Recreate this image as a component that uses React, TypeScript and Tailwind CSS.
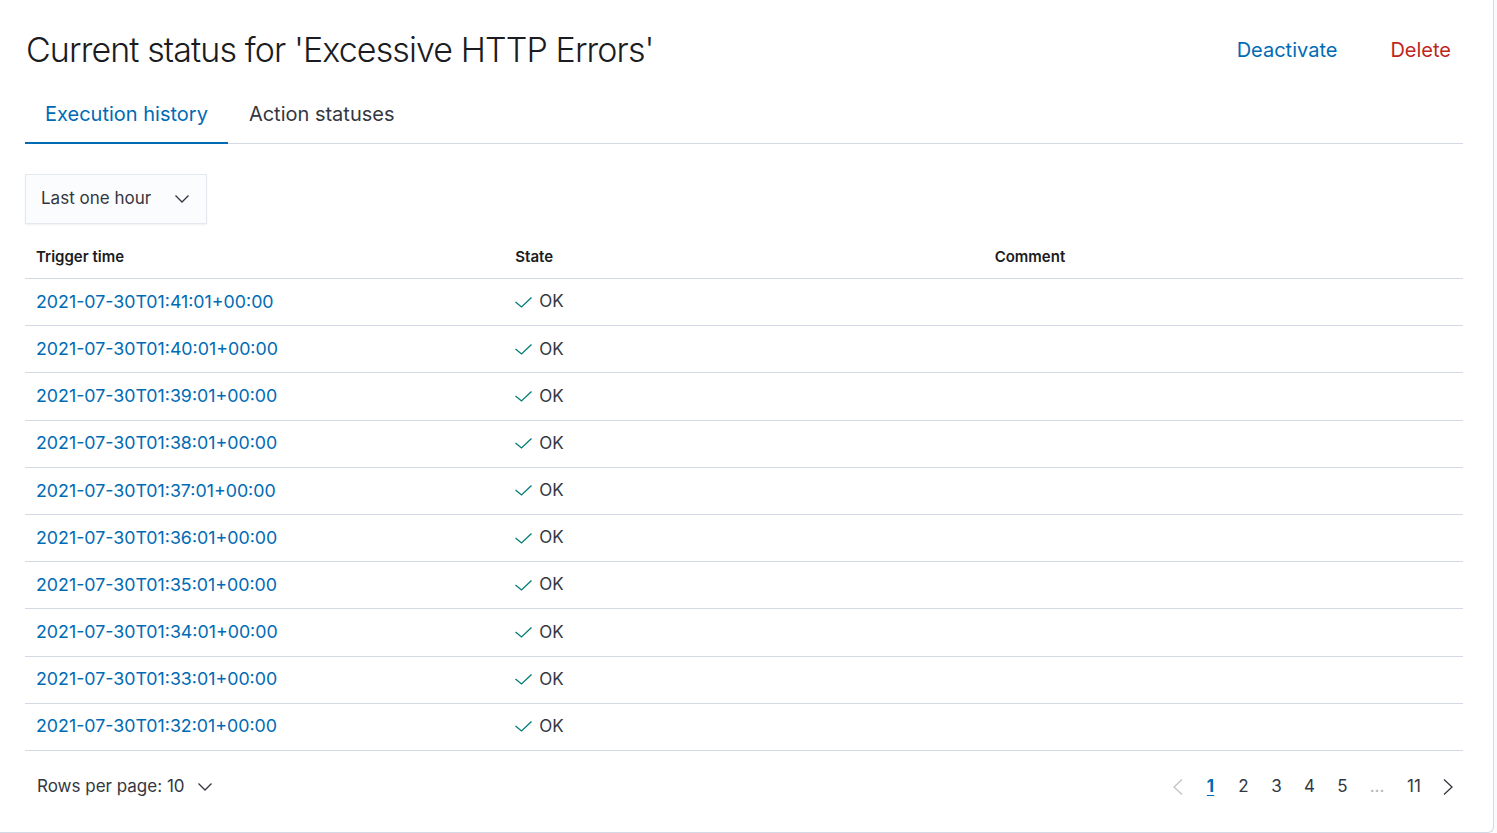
const rows = [
  "2021-07-30T01:41:01+00:00",
  "2021-07-30T01:40:01+00:00",
  "2021-07-30T01:39:01+00:00",
  "2021-07-30T01:38:01+00:00",
  "2021-07-30T01:37:01+00:00",
  "2021-07-30T01:36:01+00:00",
  "2021-07-30T01:35:01+00:00",
  "2021-07-30T01:34:01+00:00",
  "2021-07-30T01:33:01+00:00",
  "2021-07-30T01:32:01+00:00",
];

function ArrowDown() {
  return (
    <svg width="14" height="8" viewBox="0 0 14 8" fill="none" stroke="currentColor" strokeWidth="1.3">
      <polyline points="0.5,0.5 7,7 13.5,0.5" />
    </svg>
  );
}

function Arrow({ dir, className }: { dir: "left" | "right"; className?: string }) {
  return (
    <svg width="10" height="16" viewBox="0 0 10 16" fill="none" stroke="currentColor" strokeWidth="1.3" className={className}>
      {dir === "right" ? <polyline points="1,0.5 9,8 1,15.5" /> : <polyline points="9,0.5 1,8 9,15.5" />}
    </svg>
  );
}

function Tick() {
  return (
    <svg width="17" height="11" viewBox="0 0 17 11" fill="none" stroke="#017d73" strokeWidth="1.3">
      <polyline points="0.5,5 6.5,10 16.5,0.5" />
    </svg>
  );
}

export default function App() {
  return (
    <div
      className="flex h-[833px] w-[1497px] overflow-hidden bg-[#fafbfd] text-[#343741]"
      style={{ fontFamily: "Inter, 'Noto Sans', sans-serif" }}
    >
      <div className="flex h-[833px] w-[1494px] flex-col rounded-br-md border-r border-b border-[#d3dae6] bg-white pl-[25px] pr-[30px]">
        {/* header */}
        <div className="flex h-[98px] items-center justify-between pt-[2px]">
          <h1 className="pl-[1px] text-[34px] font-light leading-none tracking-[-0.9px] text-[#1a1c21]">
            Current status for 'Excessive HTTP Errors'
          </h1>
          <div className="flex items-center gap-[53px] pr-[12px] text-[20px]">
            <button className="text-[#006bb4]">Deactivate</button>
            <button className="text-[#bd271e]">Delete</button>
          </div>
        </div>

        {/* tabs */}
        <div className="flex h-[46px] border-b border-[#d3dae6] text-[20px] leading-none">
          <div className="-mb-px border-b-2 border-[#006bb4] px-[20px] pt-[6px] text-[#006bb4]">
            Execution history
          </div>
          <div className="px-[21px] pt-[6px] text-[#343741]">Action statuses</div>
        </div>

        {/* range select */}
        <div className="mt-[30px]">
          <div className="flex h-[50px] w-[182px] items-center justify-between border border-[#e4e8ef] bg-[#fbfcfd] pl-[15px] pr-[17px] text-[17px] shadow-[0_1px_2px_rgba(0,0,0,0.06)]">
            <span>Last one hour</span>
            <ArrowDown />
          </div>
        </div>

        {/* table */}
        <div className="mt-[11px]">
          <div className="grid h-[44px] grid-cols-3 items-center border-b border-[#d3dae6] pt-[1px] text-[15px] font-semibold text-[#1a1c21]">
            <div className="pl-[11px]">Trigger time</div>
            <div className="pl-[11px]">State</div>
            <div className="pl-[11px]">Comment</div>
          </div>
          {rows.map((t) => (
            <div
              key={t}
              className="grid h-[47.2px] grid-cols-3 items-center border-b border-[#d3dae6] text-[17px]"
            >
              <div className="pl-[11px] text-[17.8px] text-[#006bb4]">{t}</div>
              <div className="flex items-center gap-[7px] pl-[11px]">
                <Tick />
                <span>OK</span>
              </div>
              <div />
            </div>
          ))}
        </div>

        {/* footer */}
        <div className="flex h-[72px] items-center justify-between text-[17px]">
          <div className="flex items-center gap-[13px] pl-[12px]">
            <span>Rows per page: 10</span>
            <ArrowDown />
          </div>
          <div className="flex items-center">
            <span className="flex w-[33px] justify-center text-[#c2c3c6]">
              <Arrow dir="left" />
            </span>
            <span className="w-[33px] text-center font-bold text-[#006bb4] underline underline-offset-[3px]">1</span>
            <span className="w-[33px] text-center">2</span>
            <span className="w-[33px] text-center">3</span>
            <span className="w-[33px] text-center">4</span>
            <span className="w-[33px] text-center">5</span>
            <span className="w-[36px] text-center text-[#b4b6bb]">...</span>
            <span className="w-[38px] text-center">11</span>
            <span className="flex w-[30px] justify-center">
              <Arrow dir="right" />
            </span>
          </div>
        </div>
      </div>
    </div>
  );
}
